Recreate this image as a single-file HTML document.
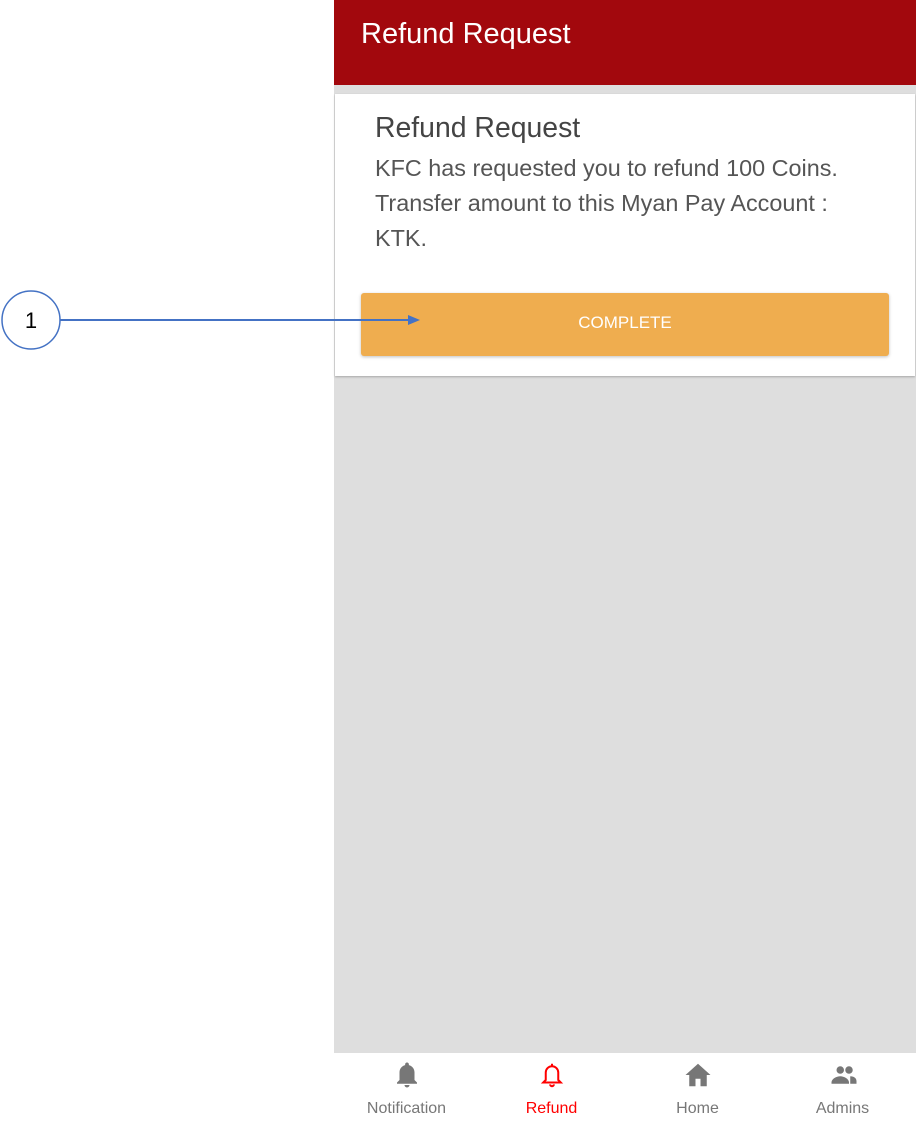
<!DOCTYPE html>
<html><head><meta charset="utf-8"><style>
body{margin:0;width:916px;height:1125px;position:relative;background:#fff;font-family:"Liberation Sans",sans-serif;overflow:hidden}
.app{position:absolute;left:334px;top:0;width:582px;height:1125px;background:#dedede}
.hdr{position:absolute;left:0;top:0;width:582px;height:85px;background:#a2080d;color:#fff;font-size:29px}
.hdr span{position:absolute;left:27px;top:18px}
.card{position:absolute;left:1px;top:94px;width:580px;height:282px;background:#fff;box-shadow:0 1px 2px rgba(0,0,0,.25)}
.t{position:absolute;left:40px;top:18px;font-size:28.4px;color:#444}
.d{position:absolute;left:40px;top:57px;font-size:23.4px;line-height:35px;color:#555;white-space:nowrap}
.btn{position:absolute;left:26px;top:199px;width:528px;height:63px;background:#efad4f;border-radius:3px;box-shadow:0 1px 3px rgba(0,0,0,.25);color:#fff;font-size:17px;text-align:center;line-height:60px}
.nav{position:absolute;left:0;top:1053px;width:582px;height:72px;background:#fff}
.it{position:absolute;top:0;width:145px;text-align:center;font-size:16px;color:#777}
.it svg{position:absolute;top:7px;left:58px}
.it div{position:absolute;top:47px;width:100%}
</style></head><body>
<div class="app">
<div class="hdr"><span>Refund Request</span></div>
<div class="card">
<div class="t">Refund Request</div>
<div class="d">KFC has requested you to refund 100 Coins.<br>Transfer amount to this Myan Pay Account :<br>KTK.</div>
<div class="btn">COMPLETE</div>
</div>
<div class="nav">
<div class="it" style="left:0"><svg width="30" height="30" viewBox="0 0 24 24"><path fill="#777" d="M12 2c-1 0-1.5.7-1.5 1.5v.6C7.8 4.8 6 7 6 10v6l-2 2v1h16v-1l-2-2v-6c0-3-1.8-5.2-4.5-5.9v-.6C13.5 2.7 13 2 12 2zm-2 18a2 2 0 004 0z"/></svg><div>Notification</div></div>
<div class="it" style="left:145px;color:#f00"><svg width="30" height="30" viewBox="0 0 24 24"><path fill="none" stroke="#f00" stroke-width="1.6" d="M12 3v1.5M7 16v-6a5 5 0 0110 0v6l2 2H5zM10.5 19.5a1.5 1.5 0 003 0"/></svg><div>Refund</div></div>
<div class="it" style="left:291px"><svg width="30" height="30" viewBox="0 0 24 24"><path fill="#777" d="M12 3L2 12h3v9h5v-6h4v6h5v-9h3z"/></svg><div>Home</div></div>
<div class="it" style="left:436px"><svg width="32" height="30" viewBox="0 0 24 24"><circle cx="9" cy="8" r="3" fill="#777"/><circle cx="16" cy="8" r="3" fill="#777"/><path fill="#777" d="M2 18c0-3 4-5 7-5s7 2 7 5v1H2zM17 13c3 0 5 1.5 5 4v2h-5z"/></svg><div>Admins</div></div>
</div>
</div>
<svg style="position:absolute;left:0;top:290px;z-index:5" width="430" height="60">
<circle cx="31" cy="30" r="29" fill="#fff" stroke="#4472c4" stroke-width="1.5"/>
<text x="31" y="38" font-size="22" text-anchor="middle" font-family="Liberation Sans" fill="#000">1</text>
<line x1="60" y1="30" x2="410" y2="30" stroke="#4472c4" stroke-width="2"/>
<polygon points="408,25 420,30 408,35" fill="#4472c4"/>
</svg>
</body></html>
